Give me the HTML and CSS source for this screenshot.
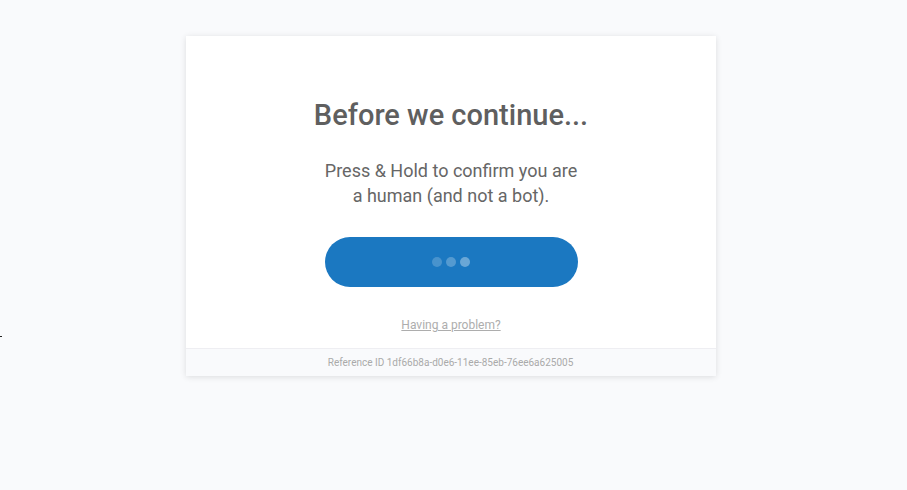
FILE: index.html
```html
<!DOCTYPE html>
<html>
<head>
<meta charset="utf-8">
<link rel="stylesheet" href="styles.css">
</head>
<body>
<span class="stray"></span>
<div class="page">
  <div class="card">
    <div class="main">
      <h1 class="title">Before we continue...</h1>
      <p class="msg">Press &amp; Hold to confirm you are<br>a human (and not a bot).</p>
      <div class="btn">
        <span class="dot d1"></span><span class="dot d2"></span><span class="dot d3"></span>
      </div>
      <a class="problem" href="#">Having a problem?</a>
    </div>
    <div class="footer">Reference ID 1df66b8a-d0e6-11ee-85eb-76ee6a625005</div>
  </div>
</div>
</body>
</html>
```
FILE: styles.css
```css
html, body { margin: 0; padding: 0; }
body {
  background: #f9fafc;
  font-family: Roboto, "Liberation Sans", sans-serif;
  width: 907px;
  height: 490px;
  position: relative;
}
.stray {
  position: absolute;
  left: 0;
  top: 336px;
  width: 2px;
  height: 1px;
  background: #222;
}
.page {
  display: flex;
  justify-content: center;
  padding: 36px 6px 0 0;
}
.card {
  width: 530px;
  background: #fff;
  box-shadow: 0 1px 6px rgba(0,0,0,0.12);
  display: flex;
  flex-direction: column;
}
.main {
  display: flex;
  flex-direction: column;
  align-items: center;
  padding: 62px 0 15px 1px;
}
.title {
  margin: 0;
  font-size: 29px;
  font-weight: 500;
  color: #5f5f5f;
  line-height: 34px;
}
.msg {
  margin: 26px 0 0;
  font-size: 18px;
  line-height: 25px;
  color: #666;
  text-align: center;
}
.btn {
  margin-top: 29px;
  width: 253px;
  height: 50px;
  border-radius: 25px;
  background: #1b78c1;
  display: flex;
  align-items: center;
  justify-content: center;
  gap: 4px;
}
.dot {
  width: 10px;
  height: 10px;
  border-radius: 50%;
  background: rgba(255,255,255,0.2);
}
.d2 { background: rgba(255,255,255,0.25); }
.d3 { background: rgba(255,255,255,0.35); }
.problem {
  margin-top: 30px;
  font-size: 12px;
  line-height: 16px;
  color: #adadad;
  text-decoration: underline;
}
.footer {
  border-top: 1px solid #eeeef2;
  background: #f9fafc;
  height: 27px;
  line-height: 27px;
  text-align: center;
  font-size: 10px;
  color: #aaa;
}
```
